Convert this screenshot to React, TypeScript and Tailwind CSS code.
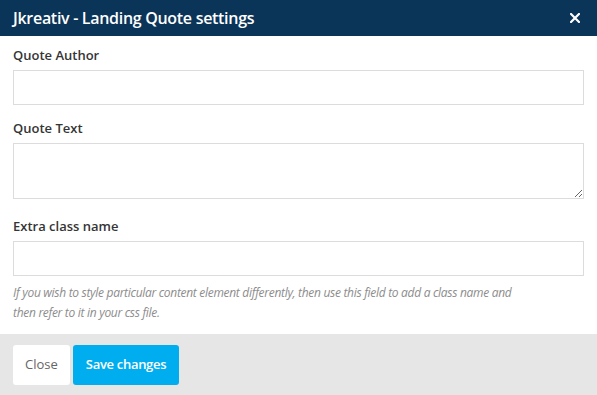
import React from 'react';

const Field: React.FC<{ label: string; className?: string; children: React.ReactNode }> = ({ label, className, children }) => (
  <div className={className}>
    <label className="block text-[13px] leading-[20px] font-semibold text-[#353535] mb-[5px]">{label}</label>
    {children}
  </div>
);

const App: React.FC = () => {
  return (
    <div className="w-[597px] h-[395px] bg-white flex flex-col font-['Open_Sans',sans-serif] overflow-hidden">
      <div className="h-[36px] bg-[#0b3459] flex items-center justify-between px-[13px] shrink-0">
        <h1 className="text-white text-[16px] font-semibold tracking-[-0.3px]">Jkreativ - Landing Quote settings</h1>
        <button className="text-white mr-[4px]">
          <svg width="10" height="10" viewBox="0 0 10 10">
            <path d="M1 1L9 9M9 1L1 9" stroke="white" strokeWidth="2.2" strokeLinecap="square" />
          </svg>
        </button>
      </div>

      <div className="flex-1 px-[13px] pt-[9px]">
        <Field label="Quote Author">
          <input className="block w-full h-[35px] border border-[#dcdcdc] outline-none" />
        </Field>
        <Field label="Quote Text" className="mt-[13px]">
          <textarea className="block w-full h-[56px] border border-[#dcdcdc] outline-none" />
        </Field>
        <Field label="Extra class name" className="mt-[17px]">
          <input className="block w-full h-[35px] border border-[#dcdcdc] outline-none" />
        </Field>
        <p className="mt-[7px] max-w-[515px] text-[12px] leading-[20px] italic text-[#8c8c8c] tracking-[-0.3px]">
          If you wish to style particular content element differently, then use this field to add a class name and then refer to it in your css file.
        </p>
      </div>

      <div className="h-[61px] shrink-0 bg-[#e6e6e6] flex items-start gap-[3px] px-[13px] pt-[11px]">
        <button className="h-[40px] px-[12px] bg-white rounded-[3px] text-[13px] text-[#666]">Close</button>
        <button className="h-[40px] px-[13px] bg-[#00aeef] rounded-[3px] text-[13px] font-semibold text-white tracking-[-0.3px]">Save changes</button>
      </div>
    </div>
  );
};

export default App;
